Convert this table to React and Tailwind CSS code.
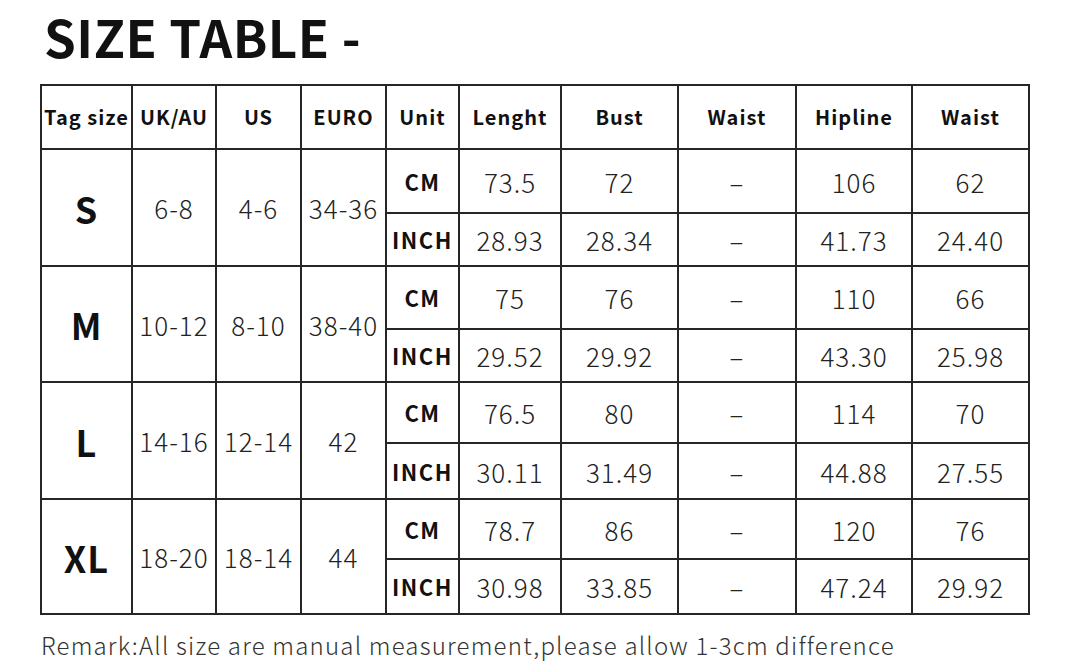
import React from 'react';

const cols = [91, 84, 85, 85, 73, 102, 117, 118, 116, 117];

const sizes = [
  { tag: 'S', uk: '6-8', us: '4-6', euro: '34-36', h: ['h-[64px]', 'h-[53px]'],
    cm: ['73.5', '72', '–', '106', '62'], inch: ['28.93', '28.34', '–', '41.73', '24.40'] },
  { tag: 'M', uk: '10-12', us: '8-10', euro: '38-40', h: ['h-[63px]', 'h-[53px]'],
    cm: ['75', '76', '–', '110', '66'], inch: ['29.52', '29.92', '–', '43.30', '25.98'] },
  { tag: 'L', uk: '14-16', us: '12-14', euro: '42', h: ['h-[61px]', 'h-[56px]'],
    cm: ['76.5', '80', '–', '114', '70'], inch: ['30.11', '31.49', '–', '44.88', '27.55'] },
  { tag: 'XL', uk: '18-20', us: '18-14', euro: '44', h: ['h-[60px]', 'h-[55px]'],
    cm: ['78.7', '86', '–', '120', '76'], inch: ['30.98', '33.85', '–', '47.24', '29.92'] },
];

const headers = ['Tag size', 'UK/AU', 'US', 'EURO', 'Unit', 'Lenght', 'Bust', 'Waist', 'Hipline', 'Waist'];

const cell = 'border-2 border-[#262626] p-0 text-center align-middle whitespace-nowrap';
const num = `${cell} text-[26px] font-light text-[#222] tracking-[1px]`;
const unit = `${cell} text-[22px] font-bold text-[#111] tracking-[1.5px]`;

export default function App() {
  return (
    <div className="w-[1073px] h-[668px] bg-white overflow-hidden text-[#222]" style={{ fontFamily: '"Noto Sans CJK SC", "Noto Sans", sans-serif' }}>
      <h1 className="ml-[44px] pt-[4px] h-[84px] text-[51px] leading-[64px] font-bold text-[#111] tracking-[0.5px]">
        SIZE TABLE -
      </h1>
      <table className="ml-[40px] border-collapse table-fixed w-[988px]">
        <colgroup>
          {cols.map((w, i) => (
            <col key={i} style={{ width: w }} />
          ))}
        </colgroup>
        <thead>
          <tr className="h-[64px]">
            {headers.map((h, i) => (
              <th key={i} className={`${cell} text-[20px] font-bold text-[#111] tracking-[1px]`}>
                {h}
              </th>
            ))}
          </tr>
        </thead>
        <tbody>
          {sizes.map((s) => (
            <React.Fragment key={s.tag}>
              <tr className={s.h[0]}>
                <td rowSpan={2} className={`${cell} text-[36px] font-bold text-[#111] tracking-[1px]`}>{s.tag}</td>
                <td rowSpan={2} className={`${num} tracking-[1.5px]`}>{s.uk}</td>
                <td rowSpan={2} className={`${num} tracking-[1.5px]`}>{s.us}</td>
                <td rowSpan={2} className={`${num} tracking-[1.5px]`}>{s.euro}</td>
                <td className={unit}>CM</td>
                {s.cm.map((v, i) => (
                  <td key={i} className={num}>{v}</td>
                ))}
              </tr>
              <tr className={s.h[1]}>
                <td className={unit}>INCH</td>
                {s.inch.map((v, i) => (
                  <td key={i} className={num}>{v}</td>
                ))}
              </tr>
            </React.Fragment>
          ))}
        </tbody>
      </table>
      <p className="ml-[41px] mt-[14px] text-[24px] leading-[32px] font-light text-[#333] tracking-[1.2px]">
        Remark:All size are manual measurement,please allow 1-3cm difference
      </p>
    </div>
  );
}
